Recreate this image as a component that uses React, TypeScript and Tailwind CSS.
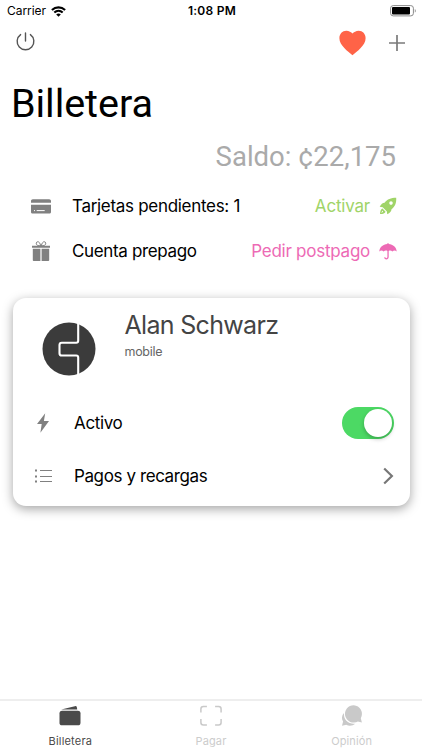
import React from "react";

function Wifi() {
  return (
    <svg width="15" height="11" viewBox="0 0 15 11" fill="none" stroke="#000" strokeWidth="2.1">
      <path d="M.9 4.1C4.7.4 10.3.4 14.1 4.1" />
      <path d="M3.3 6.6c2.5-2.3 5.9-2.3 8.4 0" />
      <path d="M7.5 10.8 5.2 8.5c1.4-1.2 3.2-1.2 4.6 0z" fill="#000" stroke="none" />
    </svg>
  );
}

function StatusBar() {
  return (
    <div className="grid h-[22px] grid-cols-3 items-center pl-[7px] pr-[5px] text-[12px] leading-none">
      <div className="flex items-center gap-[5px]">
        <span className="tracking-[-0.05px]">Carrier</span>
        <Wifi />
      </div>
      <span className="text-center text-[12px] font-semibold tracking-[0.25px]">1:08 PM</span>
      <svg className="justify-self-end" width="27" height="12" viewBox="0 0 27 12">
        <rect x=".6" y=".6" width="22.8" height="10.3" rx="2.6" fill="none" stroke="#8a8a8a" />
        <rect x="2" y="2" width="18" height="7.5" rx="1" fill="#000" />
        <path d="M24.8 4v3.6c1.3-.5 1.3-3.1 0-3.6z" fill="#8a8a8a" />
      </svg>
    </div>
  );
}

function NavBar() {
  return (
    <div className="flex h-[43px] items-center justify-between pb-[2px] pl-[16px] pr-[16px]">
      <svg className="mb-[3px]" width="19" height="19" viewBox="0 0 19 19" fill="none" stroke="#555" strokeWidth="1.4" strokeLinecap="round">
        <path d="M4.6 2.6a8.35 8.35 0 1 0 9.8 0M9.5 1v8" />
      </svg>
      <div className="flex items-center gap-[23px]">
        <svg width="27" height="26" viewBox="0 0 27 26" fill="#ff6347">
          <path d="M13.5 25.2C9.2 21.5.4 15.5.4 8.2.4 3.8 3.4.8 7.3.8c2.7 0 5 1.4 6.2 2.8C14.7 2.2 17 .8 19.7.8c3.9 0 6.9 3 6.9 7.4 0 7.3-8.8 13.3-13.1 17z" />
        </svg>
        <svg className="mr-px" width="16" height="16" viewBox="0 0 16 16" stroke="#7b7b7b" strokeWidth="1.7">
          <path d="M8 0v16M0 8h16" />
        </svg>
      </div>
    </div>
  );
}

function CardIcon() {
  return (
    <svg width="20" height="15" viewBox="0 0 20 15" fill="#808080">
      <path d="M0 3.8V2C0 1 .8.3 1.8.3h16.4C19.2.3 20 1 20 2v1.8zM0 5.7h20v7.2c0 1-.8 1.7-1.8 1.7H1.8C.8 14.6 0 13.9 0 12.9z" />
      <path d="M3 11.6h1M5.7 11.6h8" stroke="#fff" strokeWidth="1" />
    </svg>
  );
}

function GiftIcon() {
  return (
    <svg className="ml-[1px]" width="18" height="20" viewBox="0 0 18 20" fill="#808080">
      <path d="M0 4.8h18v2H0zM.8 7.7h7.6V20H2C1.3 20 .8 19.5.8 18.9zM9.6 7.7h7.6v11.2c0 .6-.5 1.1-1.2 1.1H9.6z" />
      <path d="M8.8 5C8 1.7 6.8.7 5.8.7 4 .7 3.7 3.4 5.2 4.2c1 .6 2.5.6 3.6.7zm.4 0C10 1.7 11.2.7 12.2.7c1.8 0 2.1 2.7.6 3.5-1 .6-2.5.6-3.6.7z" fill="none" stroke="#808080" />
    </svg>
  );
}

function RocketIcon() {
  return (
    <svg width="18" height="18" viewBox="0 0 18 18" fill="#a0d468">
      <path fillRule="evenodd" d="M17.2.7C11.8.7 8.4 2.1 5.5 5.8 3.6 5.9 2.2 7 .7 9.8l3 .4 4.2 4.2.3 2.8c2.8-1.3 4.2-2.7 4.3-4.9 3.6-2.8 5-6.2 4.7-11.6zM12 4.3a1.8 1.8 0 1 1 0 3.6 1.8 1.8 0 0 1 0-3.6z" />
      <path d="m3.5 11.5 3.1 3.2c-.7 1.6-2.4 2.4-5.6 2.4.1-2.8.7-4.9 2.5-5.6z" />
      <path d="m2 15.8 1.8-2.2.3 1.3z" fill="#fff" />
    </svg>
  );
}

function UmbrellaIcon() {
  return (
    <svg width="18" height="17" viewBox="0 0 18 17" fill="#ed6ab5">
      <path d="M8.3 1.1V.3h1.4v.8c4.3.3 7.7 3.3 8 7.4-1.4-1.2-3.1-1.2-4.3.1-1-1-2.4-1.4-3.7-.6v5.8c0 3.5-4.4 3.4-4.5.4h1.2c.1 1.5 2 1.4 2-.4V8c-1.3-.8-2.7-.4-3.8.6C3.4 7.3 1.7 7.3.3 8.5c.3-4.1 3.7-7.1 8-7.4z" />
    </svg>
  );
}

function InfoRow(props: { icon: React.ReactNode; label: string; labelClass: string; action: React.ReactNode }) {
  return (
    <div className="flex h-[45px] items-center pl-[31px] pr-[25px] text-[17px]">
      <span className="flex w-[41px] items-center">{props.icon}</span>
      <span className={props.labelClass}>{props.label}</span>
      <span className="ml-auto flex items-center gap-[9px] whitespace-nowrap">{props.action}</span>
    </div>
  );
}

function AccountCard() {
  return (
    <section className="mx-[12.5px] mt-[24px] h-[208.5px] rounded-[13px] bg-white pl-[17px] pr-[16px] shadow-[0_3px_11px_rgba(0,0,0,0.36)]">
      <div className="flex h-[99px]">
        <svg className="ml-[12px] mt-[24px] shrink-0" width="54" height="54" viewBox="0 0 54 54">
          <circle cx="27" cy="27" r="26.5" fill="#3b3b3b" />
          <path d="M36.2 1.2v17.5q0 2-2 2H19.8q-2.3 0-2.3 2.3v8.2q0 2.3 2.3 2.3h14.4q2 0 2 2v17.5" fill="none" stroke="#fff" strokeWidth="2.1" />
        </svg>
        <div className="ml-[29px] pt-[11px] text-[#444]">
          <h2 className="whitespace-nowrap text-[25px] leading-[32px] tracking-[-0.68px]">Alan Schwarz</h2>
          <p className="mt-[2px] text-[12.5px] leading-[17px] tracking-[-0.3px] text-[#666]">mobile</p>
        </div>
      </div>
      <div className="flex h-[53px] items-center">
        <span className="w-[44.5px] pl-[7px]">
          <svg width="12" height="20" viewBox="0 0 12 20" fill="#808080"><path d="M8.2.2 0 11.1h4.7L3.4 19.8 12 8.1H6.9z" /></svg>
        </span>
        <span className="pt-px text-[17px] tracking-[-0.35px]">Activo</span>
        <span className="ml-auto flex h-[32px] w-[52px] justify-end rounded-full bg-[#4cd964] p-[2px]">
          <span className="size-[28px] rounded-full bg-white shadow-[0_2px_4px_rgba(0,0,0,0.25)]" />
        </span>
      </div>
      <div className="flex h-[53px] items-center">
        <span className="w-[44.5px] pl-[5.5px]">
          <svg width="17" height="14" viewBox="0 0 17 14" stroke="#808080" fill="none">
            <path d="M5 1.5h12M5 7.5h12M5 12.5h12" strokeWidth="1" />
            <path d="M0 1.5h2M0 7.5h2M0 12.5h2" strokeWidth="2" />
          </svg>
        </span>
        <span className="pt-px text-[17px] tracking-[-0.4px]">Pagos y recargas</span>
        <svg className="ml-auto" width="11" height="18" viewBox="0 0 11 18" fill="none" stroke="#777" strokeWidth="2.2">
          <path d="m1.2 1.5 7.7 7.5-7.7 7.5" />
        </svg>
      </div>
    </section>
  );
}

function TabBar() {
  return (
    <nav className="mt-auto grid h-[51px] grid-cols-3 border-t-2 border-[#eee] text-[11px] leading-[14px] tracking-[0.12px]">
      <div className="flex flex-col items-center pt-[4px] text-[#4a4a4a]">
        <svg width="22" height="22" viewBox="0 0 22 22" fill="#4a4a4a">
          <path d="M2.2 4.5 15.8 1.2q1.8-.4 2.1 1.3l.3 2z" />
          <rect x=".5" y="5.7" width="21" height="14.6" rx="2.6" />
        </svg>
        <span className="mt-[7px] tracking-[0.2px]">Billetera</span>
      </div>
      <div className="flex flex-col items-center pt-[4px] text-[#ccc]">
        <svg width="22" height="22" viewBox="0 0 22 22" fill="none" stroke="#c9c9c9" strokeWidth="1.5">
          <path d="M.9 7.5V4Q.9 1.5 3.4 1.5h3.5M15.1 1.5h3.5q2.5 0 2.5 2.5v3.5M21.1 14v3.5q0 2.5-2.5 2.5h-3.5M6.9 20H3.4Q.9 20 .9 17.5V14" />
        </svg>
        <span className="mt-[7px]">Pagar</span>
      </div>
      <div className="flex flex-col items-center pt-[4px] text-[#ccc]">
        <svg width="22" height="22" viewBox="0 0 22 22" fill="#c9c9c9">
          <path d="M3 8C.5 10.4.4 14 2.1 16.6L1 20.8l4.2-1c3.3 1.6 6.8.8 9-1.1C7.1 19.2 2.4 14.8 3 8z" />
          <path d="M12.8.2a8.7 8.7 0 1 0 4.1 16.3l4 .9-1.1-4.1A8.8 8.8 0 0 0 12.8.2z" stroke="#fff" strokeWidth="1.2" paintOrder="stroke" />
        </svg>
        <span className="mt-[7px]">Opinión</span>
      </div>
    </nav>
  );
}

export default function App() {
  return (
    <main className="flex h-[750px] w-[422px] flex-col overflow-hidden bg-white font-[Inter,sans-serif] text-black">
      <StatusBar />
      <NavBar />
      <h1 className="h-[70px] pl-[11px] pt-[15px] font-[Roboto,sans-serif] text-[39.5px] leading-[48px] tracking-[-0.05px]">Billetera</h1>
      <p className="h-[48.5px] pr-[26px] pt-[4px] text-right font-[Roboto,sans-serif] text-[27.5px] leading-[36px] text-[#aaa]">Saldo: ¢22,175</p>
      <InfoRow
        icon={<CardIcon />}
        label="Tarjetas pendientes: 1"
        labelClass="pt-[2px] tracking-[-0.3px]"
        action={<><span className="pt-[2px] tracking-[-0.2px] text-[#a0d468]">Activar</span><RocketIcon /></>}
      />
      <InfoRow
        icon={<GiftIcon />}
        label="Cuenta prepago"
        labelClass="pt-[2px] tracking-[-0.35px]"
        action={<><span className="pt-[2px] tracking-[-0.25px] text-[#ed6ab5]">Pedir postpago</span><UmbrellaIcon /></>}
      />
      <AccountCard />
      <TabBar />
    </main>
  );
}
